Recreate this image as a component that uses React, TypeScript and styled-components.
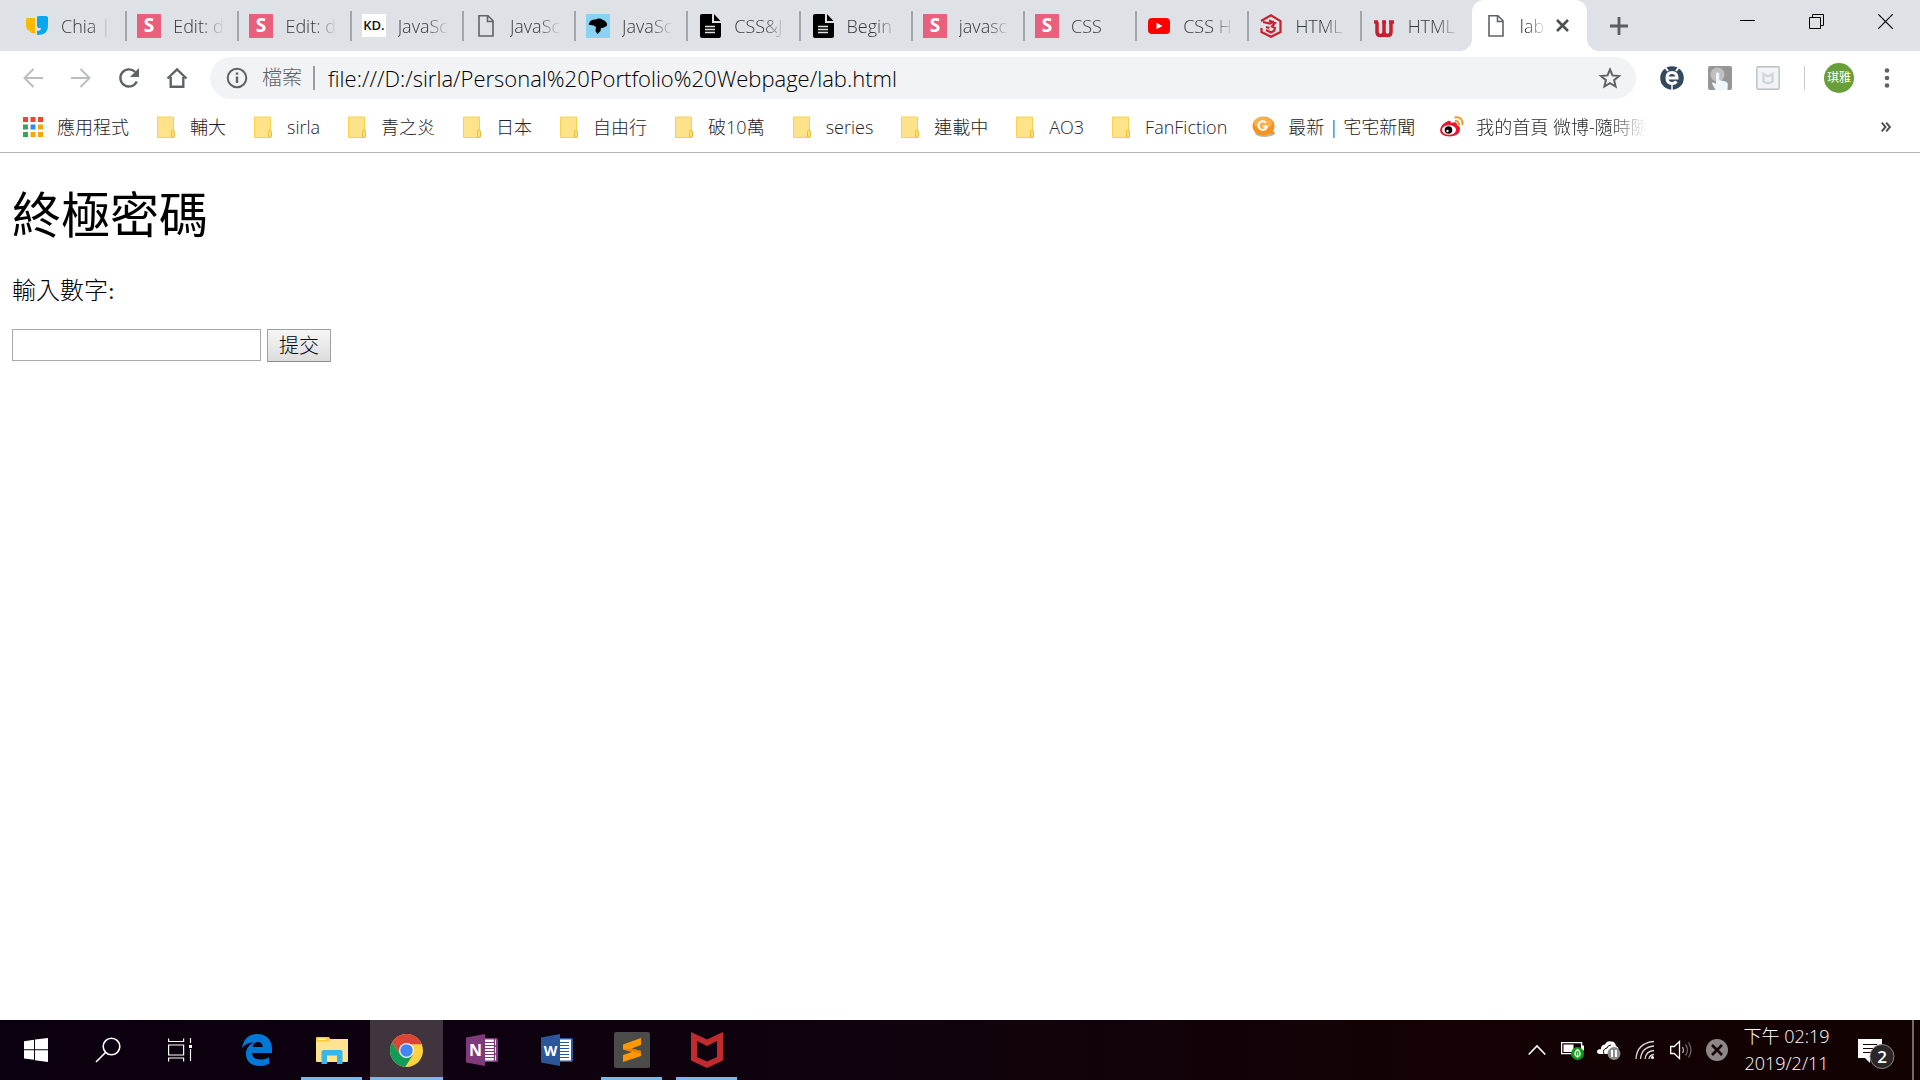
import React from "react";
import styled, { createGlobalStyle, css } from "styled-components";

const GlobalStyle = createGlobalStyle`
  *, *::before, *::after { box-sizing: border-box; }
  body { margin: 0; background: #fff; }
  button { font: inherit; color: inherit; padding: 0; border: 0; background: none; }
  a { color: inherit; text-decoration: none; }
  svg { display: block; flex: none; }
`;

const uiFont = `"Open Sans", "Noto Sans CJK TC", sans-serif`;
const pageFont = `"Liberation Serif", "Noto Sans CJK TC", serif`;

/* ---------- layout ---------- */

const Screen = styled.div`
  min-height: 100vh;
  display: flex;
  flex-direction: column;
  font-family: ${uiFont};
  font-weight: 300;
`;

const TabBar = styled.header`
  display: flex;
  height: 51px;
  background: #dee1e6;
`;

const TabStrip = styled.div`
  flex: 1;
  min-width: 0;
  display: flex;
  padding-left: 13px;
`;

const Tab = styled.a<{ $active?: boolean }>`
  flex: 1 1 0;
  min-width: 0;
  display: flex;
  align-items: center;
  padding-right: 13px;
  font-size: 18px;
  color: #35383c;
  ${(p) =>
    p.$active &&
    css`
      position: relative;
      padding-right: 16px;
      color: #1f2124;
      background: #fff;
      border-radius: 12px 12px 0 0;
      &::before,
      &::after {
        content: "";
        position: absolute;
        bottom: 0;
        width: 12px;
        height: 12px;
      }
      &::before {
        right: 100%;
        background: radial-gradient(circle at 0 0, transparent 12px, #fff 12px);
      }
      &::after {
        left: 100%;
        background: radial-gradient(circle at 100% 0, transparent 12px, #fff 12px);
      }
    `}
`;

const TabDivider = styled.span<{ $hidden?: boolean }>`
  width: 2px;
  height: 30px;
  margin-right: 10px;
  background: ${(p) => (p.$hidden ? "transparent" : "#a2a5a9")};
`;

const IconSlot = styled.span`
  flex: none;
  width: 24px;
  height: 24px;
  display: grid;
  place-items: center;
`;

const FadingText = styled.span`
  flex: 1;
  min-width: 0;
  margin-left: 12px;
  line-height: 26px;
  overflow: hidden;
  white-space: nowrap;
  mask-image: linear-gradient(to right, #000 calc(100% - 22px), transparent);
`;

const WindowArea = styled.div`
  flex: none;
  width: 333px;
  display: flex;
  justify-content: space-between;
`;

const NewTab = styled.button`
  width: 64px;
  display: grid;
  place-items: center;
`;

const WindowButtons = styled.div`
  display: flex;
`;

const WindowButton = styled.button`
  width: 69px;
  height: 42px;
  display: grid;
  place-items: center;
`;

const Toolbar = styled.nav`
  display: flex;
  align-items: center;
  height: 54px;
  padding: 0 21px;
`;

const NavButtons = styled.div`
  display: flex;
  gap: 24px;
  margin-right: 21px;
`;

const ToolButton = styled.button`
  width: 24px;
  height: 24px;
  display: grid;
  place-items: center;
`;

const Omnibox = styled.div`
  flex: 1;
  min-width: 0;
  display: flex;
  align-items: center;
  height: 42px;
  padding: 0 14px 0 15px;
  border-radius: 21px;
  background: #f1f3f4;
`;

const Scheme = styled.label`
  margin-left: 13px;
  padding-right: 11px;
  border-right: 2px solid #9a9da1;
  font-size: 20px;
  line-height: 24px;
  color: #5f6368;
`;

const Address = styled.input`
  flex: 1;
  min-width: 0;
  margin-left: 13px;
  padding: 0;
  border: 0;
  outline: 0;
  background: none;
  font: 300 22px/30px ${uiFont};
  color: #000;
`;

const Extensions = styled.div`
  display: flex;
  align-items: center;
  gap: 24px;
  margin: 0 19px 0 24px;
`;

const ToolDivider = styled.span`
  width: 1px;
  height: 24px;
  background: #c9cbce;
`;

const Avatar = styled.button`
  width: 30px;
  height: 30px;
  margin: 0 21px 0 0;
  border-radius: 50%;
  background: #689f38;
  color: #fff;
  font-size: 12px;
  font-weight: 400;
  line-height: 30px;
`;

const Bookmarks = styled.nav`
  display: flex;
  align-items: center;
  height: 48px;
  padding: 0 22px 4px 21px;
  border-bottom: 1px solid #b4b5b7;
`;

const BookmarkList = styled.div`
  flex: 1;
  min-width: 0;
  display: flex;
  gap: 25px;
`;

const Bookmark = styled.a`
  flex: none;
  display: flex;
  align-items: center;
  gap: 12px;
  font-size: 18px;
  line-height: 26px;
  white-space: nowrap;
  color: #1f2124;
`;

const ClippedTitle = styled.span`
  width: 170px;
  overflow: hidden;
  mask-image: linear-gradient(to right, #000 calc(100% - 36px), transparent);
`;

const Page = styled.main`
  flex: 1;
  padding: 34px 12px;
  font-family: ${pageFont};
  font-weight: 300;
  color: #000;
`;

const Title = styled.h1`
  margin: 0 0 26px;
  font-size: 49px;
  line-height: 60px;
  font-weight: 400;
`;

const Prompt = styled.label`
  display: block;
  margin-bottom: 20px;
  font-size: 24px;
  line-height: 36px;
`;

const Answer = styled.div`
  display: flex;
  align-items: flex-start;
  gap: 6px;
`;

const NumberInput = styled.input`
  width: 249px;
  height: 32px;
  padding: 2px 4px;
  border: 1px solid #a9a9a9;
  font-size: 20px;
`;

const Submit = styled.button`
  width: 64px;
  height: 33px;
  padding-top: 1px;
  border: 1px solid #a0a0a0;
  border-bottom-color: #8a8a8a;
  border-radius: 1px;
  background: linear-gradient(#f6f6f6, #dddddd);
  font-size: 20px;
  line-height: 30px;
`;

const Taskbar = styled.footer`
  display: flex;
  justify-content: space-between;
  height: 60px;
  background: linear-gradient(90deg, #0b000f 0%, #10030f 45%, #140204 75%, #130202 100%);
  color: #fff;
`;

const TaskGroup = styled.div`
  display: flex;
`;

const SystemButton = styled.button`
  width: 72px;
  display: grid;
  place-items: center;
`;

const Apps = styled.div`
  display: flex;
  gap: 2px;
  margin-left: 4px;
`;

const AppButton = styled.button<{ $state?: "open" | "active" }>`
  width: 73px;
  display: grid;
  grid-template-rows: 1fr 3px;
  place-items: center;
  background: ${(p) => (p.$state === "active" ? "#40353f" : "none")};
  &::after {
    content: "";
    width: ${(p) => (p.$state === "active" ? "73px" : "61px")};
    height: 3px;
    background: ${(p) => (p.$state ? "#76b9ed" : "transparent")};
  }
  svg {
    margin-top: 3px;
  }
`;

const Tray = styled.div`
  display: flex;
  align-items: center;
`;

const TrayButton = styled.button`
  width: 36px;
  height: 60px;
  display: grid;
  place-items: center;
`;

const Clock = styled.time`
  width: 107px;
  padding-right: 4px;
  text-align: center;
  font-size: 18px;
  line-height: 27px;
`;

const Notifications = styled.button`
  width: 70px;
  height: 60px;
  display: grid;
  place-items: center;
`;

const ShowDesktop = styled.button`
  width: 8px;
  height: 60px;
  border-left: 2px solid #77696a;
`;

/* ---------- favicons ---------- */

const QuoteIcon = () => (
  <svg width="24" height="24" viewBox="0 0 24 24">
    <path d="M1 5.500Q1 4 2.500 4H10v13H7c-4 0-6-2-6-6z" fill="#fcb900" />
    <path d="M4 17q6 1 6-3v5.500q-4 0-6-2.500z" fill="#fcb900" />
    <path d="M12 3.500Q12 2 13.500 2H21q2 0 2 2v7c0 7-3.500 10-11 10v-4q4 0 4-3h-1.500q-2.500 0-2.500-2.500z" fill="#09a8ec" />
  </svg>
);

const SIcon = () => (
  <svg width="24" height="24" viewBox="0 0 24 24">
    <path d="M0 0h24v24H0z" fill="#e8607c" />
    <text x="12" y="18" textAnchor="middle" fontFamily="Open Sans, sans-serif" fontWeight="700" fontSize="19" fill="#fff">S</text>
  </svg>
);

const KdIcon = () => (
  <svg width="24" height="24" viewBox="0 0 24 24">
    <path d="M0 0h24v23H0z" fill="#fff" />
    <text x="12" y="16" textAnchor="middle" fontFamily="Open Sans, sans-serif" fontWeight="600" fontSize="13" fill="#111">KD.</text>
  </svg>
);

const FileIcon = () => (
  <svg width="24" height="24" viewBox="0 0 24 24" fill="none" stroke="#5f6368" strokeWidth="1.600">
    <path d="M5 1.800h9l5 5V22H5zM13.500 2v5.500h5" />
  </svg>
);

const BirdIcon = () => (
  <svg width="24" height="24" viewBox="0 0 24 24">
    <path d="M0 0h24v24H0z" fill="#88d3f1" />
    <path d="M3 9.500Q4.500 5 10 5.500 13 3.500 17 6q4 1.500 4 4.500.5 2-1.500 2-2 1.500-4.500 1.500l-.5 3-3 3-2-3 .5-4Q8 10.500 3 11z" fill="#000" />
  </svg>
);

const DocIcon = () => (
  <svg width="24" height="24" viewBox="0 0 24 24">
    <path d="M2 2q0-2 2-2h10v9h9v13q0 2-2 2H4q-2 0-2-2zM16 0l6.500 7H16z" fill="#000" />
    <path d="M7 12.500h10M7 15.500h10M7 18.500h10" stroke="#dee1e6" strokeWidth="1.400" />
  </svg>
);

const YouTubeIcon = () => (
  <svg width="24" height="24" viewBox="0 0 24 24">
    <rect x="1" y="4" width="22" height="16" rx="4" fill="#f00" />
    <path d="M9.500 8.700v6.600l6-3.300z" fill="#fff" />
  </svg>
);

const HexThreeIcon = () => (
  <svg width="24" height="24" viewBox="0 0 24 24" fill="none" stroke="#c8202f" strokeWidth="2.200">
    <path d="M2 7l10-5.700L21.500 7v11L12 22.800 2.500 18v-4" />
    <path d="M4 8l7 1.500 4-2M7 13l3.500 1M10 6.500l6 2.500-3 3.500 3 1.500-1 3-3 1.500-5-2.500" />
  </svg>
);

const WIcon = () => (
  <svg width="24" height="24" viewBox="0 0 24 24" fill="none" stroke="#c5202f" strokeWidth="3.500">
    <path d="M2 8h4M5 8v10q0 3.500 3.500 3.500T12 18V8M12 18q0 3.500 3.500 3.500T19 18V8M17 8h5M10 8h4" />
  </svg>
);

/* ---------- bookmark icons ---------- */

const appColors = ["#f44336", "#f44336", "#f44336", "#34a853", "#2491eb", "#f9a60a", "#34a853", "#f9a60a", "#f9a60a"];

const AppsIcon = () => (
  <svg width="20" height="20" viewBox="0 0 20 20">
    {appColors.map((c, i) => (
      <rect key={i} x={(i % 3) * 7.500} y={Math.floor(i / 3) * 7.500} width="5" height="5" fill={c} />
    ))}
  </svg>
);

const FolderIcon = () => (
  <svg width="18" height="22" viewBox="0 0 18 22">
    <path d="M.5 1h16v15q1-1 1 1v3.500q0 1-1 1H.5z" fill="#ffe38b" stroke="#f8d348" />
    <path d="M14.500 21v-5.500q0-1.500 1.500-1.500t1.500 1.500V20q0 1.500-1.500 1.500z" fill="#fde07c" stroke="#e8bf3c" />
  </svg>
);

const GIcon = () => (
  <svg width="24" height="22" viewBox="0 0 24 22">
    <ellipse cx="13" cy="17" rx="10" ry="4" fill="#b9b5b0" />
    <ellipse cx="11.500" cy="10" rx="11" ry="9.500" fill="#f7941d" />
    <ellipse cx="11" cy="7" rx="9" ry="6" fill="#fbb04c" />
    <path d="M19 14l4 4-7-.5z" fill="#f7941d" />
    <path d="M14 6.800A4.300 4.300 0 1 0 15 10.500H11" fill="none" stroke="#fff" strokeWidth="2" />
  </svg>
);

const WeiboIcon = () => (
  <svg width="24" height="22" viewBox="0 0 24 22">
    <path d="M8 5q3-1 3 2 6-2 6 2 3 1 3 4 0 7-10 7.500Q0 20 0 14 1 8 8 5z" fill="#e6162d" />
    <ellipse cx="9" cy="14" rx="7" ry="4.800" fill="#fff" />
    <circle cx="8.500" cy="14" r="3.800" fill="#000" />
    <circle cx="7.500" cy="15" r="1.200" fill="#fff" />
    <path d="M14.500 1.500Q23 0 22.500 9M15 5q4-.5 4 4" fill="none" stroke="#f7931e" strokeWidth="1.900" />
  </svg>
);

/* ---------- toolbar icons ---------- */

const line = { fill: "none", stroke: "#5f6368", strokeWidth: 2.400 } as const;

const BackIcon = () => (
  <svg width="24" height="24" viewBox="0 0 24 24" fill="none" stroke="#bbbdc0" strokeWidth="2">
    <path d="M22 12H4M12.500 3L3.500 12l9 9" />
  </svg>
);

const ForwardIcon = () => (
  <svg width="24" height="24" viewBox="0 0 24 24" fill="none" stroke="#bbbdc0" strokeWidth="2">
    <path d="M2 12h18M11.500 3l9 9-9 9" />
  </svg>
);

const ReloadIcon = () => (
  <svg width="24" height="24" viewBox="0 0 24 24">
    <path d="M19.800 15.500A8.600 8.600 0 1 1 18.200 6" {...line} />
    <path d="M22 2v9h-9z" fill="#5f6368" />
  </svg>
);

const HomeIcon = () => (
  <svg width="24" height="24" viewBox="0 0 24 24">
    <path d="M2.500 12.500L12 3.500l9.500 9M5.700 11v9.800h12.600V11" {...line} />
  </svg>
);

const InfoIcon = () => (
  <svg width="24" height="24" viewBox="0 0 24 24">
    <circle cx="12" cy="12" r="9.300" {...line} strokeWidth="2" />
    <path d="M12 10.500v6.500M12 6.500v2.300" {...line} />
  </svg>
);

const StarIcon = () => (
  <svg width="24" height="24" viewBox="0 0 24 24">
    <path d="M12 3.500l2.500 5.900 6.500.6-4.900 4.200 1.500 6.300L12 17.100l-5.600 3.400 1.500-6.300L3 10l6.500-.6z" {...line} strokeWidth="2" />
  </svg>
);

const EIcon = () => (
  <svg width="24" height="24" viewBox="0 0 24 24">
    <circle cx="12" cy="12" r="11.800" fill="#34495e" />
    <path d="M5 1l3 4M19 1l-3 4" stroke="#fff" strokeWidth="2" />
    <path d="M7 12h10q0-5.500-5-5.500T7 12q0 5.500 5 5.500 3 0 4.500-2" fill="none" stroke="#fff" strokeWidth="3" />
    <path d="M12 19v5" stroke="#fff" strokeWidth="1.500" />
  </svg>
);

const TouchIcon = () => (
  <svg width="24" height="24" viewBox="0 0 24 24">
    <rect width="24" height="24" rx="2" fill="#969696" />
    <circle cx="9.500" cy="8.500" r="7" fill="#c0c0c0" />
    <path d="M8 8q0-1.700 1.600-1.700T11.200 8v6l6.300 1.500q2.500.5 2.300 3L19.500 24H7.500L4 17.500q0-2 4 .5z" fill="#f0f6fd" />
  </svg>
);

const ShieldIcon = () => (
  <svg width="24" height="24" viewBox="0 0 24 24" fill="none">
    <rect x=".8" y=".8" width="22.400" height="22.400" rx="1.500" fill="#f1f3f4" stroke="#b8c0c6" strokeWidth="1.400" />
    <path d="M7.500 8l4.500 2.500L16.500 8v7.500L12 17.500l-4.500-2z" stroke="#cfd5d9" strokeWidth="2.400" />
  </svg>
);

const MenuIcon = () => (
  <svg width="24" height="24" viewBox="0 0 24 24" fill="#5f6368">
    <circle cx="12" cy="4.500" r="2.300" />
    <circle cx="12" cy="12" r="2.300" />
    <circle cx="12" cy="19.500" r="2.300" />
  </svg>
);

/* ---------- data ---------- */

const tabs = [
  { title: "Chia | ", Icon: QuoteIcon },
  { title: "Edit: d", Icon: SIcon },
  { title: "Edit: d", Icon: SIcon },
  { title: "JavaSc", Icon: KdIcon },
  { title: "JavaSc", Icon: FileIcon },
  { title: "JavaSc", Icon: BirdIcon },
  { title: "CSS&J", Icon: DocIcon },
  { title: "Begin", Icon: DocIcon },
  { title: "javasc", Icon: SIcon },
  { title: "CSS", Icon: SIcon },
  { title: "CSS H", Icon: YouTubeIcon },
  { title: "HTML", Icon: HexThreeIcon },
  { title: "HTML", Icon: WIcon },
];

const folders = ["輔大", "sirla", "青之炎", "日本", "自由行", "破10萬", "series", "連載中", "AO3", "FanFiction"];

/* ---------- taskbar icons ---------- */

const WindowsIcon = () => (
  <svg width="24" height="24" viewBox="0 0 24 24" fill="#fff">
    <path d="M0 3.200L10 1.800v9.400H0zM11 1.600L24 0v11.200H11zM0 12.200h10v9.600L0 20.600zM11 12.200h13V24l-13-1.800z" />
  </svg>
);

const SearchIcon = () => (
  <svg width="26" height="26" viewBox="0 0 26 26" fill="none" stroke="#fff" strokeWidth="1.600">
    <circle cx="16.500" cy="9.500" r="8.300" />
    <path d="M10.500 15.500L1 25" />
  </svg>
);

const TaskViewIcon = () => (
  <svg width="24" height="24" viewBox="0 0 24 24" fill="none" stroke="#fff" strokeWidth="1.200">
    <path d="M.6.5v3h15v-3M.6 23.500v-3.500h15v3.500M.6 7h15v10H.6zM22.500 0v5M22.500 11v12" />
    <path d="M21 7h3v3h-3z" fill="#fff" stroke="none" />
  </svg>
);

const EdgeIcon = () => (
  <svg width="30" height="32" viewBox="0 0 30 32">
    <path
      d="M0 14C1.500 5 7 0 15.500 0 24 0 30 6 30 14.500V19H10c0 4.500 4 6.500 8.500 6.500 3 0 6-.8 8.500-2.300v6.500C24 31.400 21 32 17.500 32 9 32 4 27 4 20c0-5.500 3-9.500 8-11.500C6.500 8.500 2.500 10.500 0 14zM10.500 13h10.200c0-3-1.500-5-4.700-5s-5 2-5.500 5z"
      fill="#0078d7"
    />
  </svg>
);

const ExplorerIcon = () => (
  <svg width="32" height="27" viewBox="0 0 32 27">
    <path d="M0 2h32v22q0 1-1 1H1q-1 0-1-1z" fill="#ffe391" />
    <path d="M0 1q0-1 1-1h12l1.500 2.500L13 4.500H0z" fill="#fccb3a" />
    <path d="M2 2.300h8" stroke="#fff" strokeWidth="1.200" />
    <path d="M5.500 27V15q0-2 2-2h17q2 0 2 2v12h-5.500v-8.500H11V27z" fill="#38b6e8" />
  </svg>
);

const ChromeIcon = () => (
  <svg width="33" height="33" viewBox="0 0 48 48">
    <circle cx="24" cy="24" r="24" fill="#fdd13f" />
    <path d="M3.200 12A24 24 0 0 1 44.800 12L46 15H24l-9.500 14z" fill="#db4437" />
    <path d="M3.200 12A24 24 0 0 0 22 47.900L33.500 30 24 34l-9.500-4.500z" fill="#0f9d58" />
    <circle cx="24" cy="24" r="11" fill="#f1f1f1" />
    <circle cx="24" cy="24" r="9" fill="#4285f4" />
  </svg>
);

const OfficeIcon = ({ letter, color }: { letter: string; color: string }) => (
  <svg width="32" height="32" viewBox="0 0 32 32">
    <path d="M18 4h12.500q1.500 0 1.500 1.500v21q0 1.500-1.500 1.500H18z" fill={color} />
    <path d="M19 5.500h11v21H19z" fill="#fff" />
    <path d="M19 8.500h9M19 11.500h9M19 14.500h9M19 17.500h9M19 20.500h9M19 23.500h9" stroke={color} strokeWidth="1.200" />
    {letter === "N" && <path d="M28.500 4v24M28.500 12h3M28.500 20h3" stroke={color} strokeWidth="1.400" />}
    <path d="M0 3.500L19 0v32L0 28.500z" fill={color} />
    <text x="9.500" y="22" textAnchor="middle" fontFamily="Open Sans, sans-serif" fontWeight="700" fontSize={letter === "N" ? 16 : 14} fill="#fff">{letter}</text>
  </svg>
);

const SublimeIcon = () => (
  <svg width="36" height="36" viewBox="0 0 36 36">
    <rect width="36" height="36" rx="2" fill="#4b4b49" />
    <path d="M9 12.500L27 6v7l-9.500 3.500L27 19v5L9 30v-7l9-3-9-2.500z" fill="#ff9800" />
    <path d="M9 17.500l8.500-1L27 19v2.500l-8-2z" fill="#e88100" />
  </svg>
);

const McAfeeIcon = () => (
  <svg width="32" height="36" viewBox="0 0 32 36">
    <path d="M0 0l16 7.500L32 0v28.500L16 36 0 28.500zM6 9v16l10 4.500L26 25V9l-10 5z" fill="#c02b2e" fillRule="evenodd" />
  </svg>
);

const ChevronIcon = () => (
  <svg width="18" height="12" viewBox="0 0 18 12" fill="none" stroke="#fff" strokeWidth="1.600">
    <path d="M.7 10.500L9 2l8.300 8.500" />
  </svg>
);

const BatteryIcon = () => (
  <svg width="24" height="20" viewBox="0 0 24 20">
    <path d="M.6 2.600h20v11H.6z" fill="none" stroke="#fff" strokeWidth="1.300" />
    <path d="M2.500 4.500h10v7.500h-10zM21 5.500h2v5h-2z" fill="#fff" />
    <circle cx="16.500" cy="13.500" r="6.500" fill="#129a1c" />
    <path d="M16.500 9.500q3 2.500 2.500 5-.5 2-2.500 2-2 0-2.500-2-.5-2.500 2.500-5zM16.500 12.500v5.500" fill="none" stroke="#fff" strokeWidth="1.200" />
  </svg>
);

const CloudIcon = () => (
  <svg width="24" height="20" viewBox="0 0 24 20">
    <path d="M4 11Q3 5 8 4.500 10 0 14 1.500 18 1 19 6q3 1 2.500 5v3H3q-3 0-3-2.500T4 9z" fill="#fff" />
    <path d="M7 14q-2-5 3-6 1-3 4-3" fill="none" stroke="#150304" strokeWidth="1" />
    <circle cx="17" cy="13.500" r="6.500" fill="#8c8c8c" />
    <path d="M15 10v7M19 10v7" stroke="#fff" strokeWidth="2" />
  </svg>
);

const WifiIcon = () => (
  <svg width="20" height="20" viewBox="0 0 20 20" fill="none" stroke="#d8d4d4" strokeWidth="1.300">
    <path d="M1 19Q2 3 19 1.500M5.500 19Q6.500 7 19 6M10 19q1-8 9-8.500M14 19q.5-4 5-4.500" />
    <circle cx="17.500" cy="17.500" r="1.500" fill="#fff" stroke="none" />
  </svg>
);

const VolumeIcon = () => (
  <svg width="22" height="20" viewBox="0 0 22 20" fill="none" stroke="#fff" strokeWidth="1.300">
    <path d="M.7 6.500h3.500L9.500 1.500v17l-5.300-5H.7z" />
    <path d="M12.500 7q2 3 0 6" stroke="#aaa" />
    <path d="M15.500 4.500q4 5.500 0 11M18.500 2.500q5 7.500 0 15" stroke="#6d6364" />
  </svg>
);

const BlockedIcon = () => (
  <svg width="22" height="22" viewBox="0 0 22 22">
    <circle cx="11" cy="11" r="11" fill="#8e8788" />
    <path d="M6 6l10 10M16 6L6 16" stroke="#150304" strokeWidth="2.600" />
  </svg>
);

const NoticeIcon = () => (
  <svg width="38" height="38" viewBox="0 0 38 38">
    <path d="M0 8h24v19H12v5l-5-5H0z" fill="#fff" />
    <path d="M5 13.500h14M5 17.500h14M5 21.500h9" stroke="#150304" strokeWidth="1.200" />
    <circle cx="24" cy="25.500" r="12" fill="#2b2728" stroke="#8b8586" />
    <text x="24" y="32" textAnchor="middle" fontFamily="Open Sans, sans-serif" fontWeight="600" fontSize="17" fill="#fff">2</text>
  </svg>
);

/* ---------- app ---------- */

export default function App() {
  return (
    <Screen>
      <GlobalStyle />
      <TabBar>
        <TabStrip>
          {tabs.map(({ title, Icon }, i) => (
            <Tab key={i} href="#">
              <TabDivider $hidden={i === 0} />
              <IconSlot><Icon /></IconSlot>
              <FadingText>{title}</FadingText>
            </Tab>
          ))}
          <Tab href="#" $active>
            <TabDivider $hidden />
            <IconSlot><FileIcon /></IconSlot>
            <FadingText>lab</FadingText>
            <IconSlot>
              <svg width="24" height="24" viewBox="0 0 24 24" stroke="#4b4e52" strokeWidth="2.600">
                <path d="M10 6l11 11M21 6L10 17" />
              </svg>
            </IconSlot>
          </Tab>
        </TabStrip>
        <WindowArea>
          <NewTab aria-label="New tab">
            <svg width="18" height="18" viewBox="0 0 18 18" stroke="#5a5d61" strokeWidth="2.800">
              <path d="M9 0v18M0 9h18" />
            </svg>
          </NewTab>
          <WindowButtons>
            <WindowButton aria-label="Minimize">
              <svg width="15" height="15" viewBox="0 0 15 15" stroke="#000">
                <path d="M0 6.500h15" />
              </svg>
            </WindowButton>
            <WindowButton aria-label="Restore">
              <svg width="15" height="15" viewBox="0 0 15 15" stroke="#000" fill="none">
                <path d="M.5 3.500h11v11H.5zM3.500 3.500v-3h11v11h-3" />
              </svg>
            </WindowButton>
            <WindowButton aria-label="Close">
              <svg width="15" height="15" viewBox="0 0 15 15" stroke="#000" strokeWidth="1.200">
                <path d="M0 0l15 15M15 0L0 15" />
              </svg>
            </WindowButton>
          </WindowButtons>
        </WindowArea>
      </TabBar>

      <Toolbar>
        <NavButtons>
          <ToolButton aria-label="Back"><BackIcon /></ToolButton>
          <ToolButton aria-label="Forward"><ForwardIcon /></ToolButton>
          <ToolButton aria-label="Reload"><ReloadIcon /></ToolButton>
          <ToolButton aria-label="Home"><HomeIcon /></ToolButton>
        </NavButtons>
        <Omnibox>
          <InfoIcon />
          <Scheme htmlFor="address">檔案</Scheme>
          <Address id="address" defaultValue="file:///D:/sirla/Personal%20Portfolio%20Webpage/lab.html" />
          <ToolButton aria-label="Bookmark"><StarIcon /></ToolButton>
        </Omnibox>
        <Extensions>
          <ToolButton aria-label="Extension E"><EIcon /></ToolButton>
          <ToolButton aria-label="Extension Touch"><TouchIcon /></ToolButton>
          <ToolButton aria-label="Extension Shield"><ShieldIcon /></ToolButton>
          <ToolDivider />
        </Extensions>
        <Avatar>琪雅</Avatar>
        <ToolButton aria-label="Menu"><MenuIcon /></ToolButton>
      </Toolbar>

      <Bookmarks>
        <BookmarkList>
          <Bookmark href="#"><IconSlot><AppsIcon /></IconSlot>應用程式</Bookmark>
          {folders.map((name) => (
            <Bookmark key={name} href="#"><IconSlot><FolderIcon /></IconSlot>{name}</Bookmark>
          ))}
          <Bookmark href="#"><IconSlot><GIcon /></IconSlot>最新 | 宅宅新聞</Bookmark>
          <Bookmark href="#"><IconSlot><WeiboIcon /></IconSlot><ClippedTitle>我的首頁 微博-隨時隨</ClippedTitle></Bookmark>
        </BookmarkList>
        <ToolButton aria-label="More bookmarks">
          <svg width="10" height="10" viewBox="0 0 10 10" fill="none" stroke="#4b4e52" strokeWidth="1.900">
            <path d="M.7.7L4.500 5 .7 9.300M5.200.7L9 5 5.200 9.300" />
          </svg>
        </ToolButton>
      </Bookmarks>

      <Page>
        <Title>終極密碼</Title>
        <Prompt htmlFor="guess">輸入數字:</Prompt>
        <Answer>
          <NumberInput id="guess" type="text" />
          <Submit type="button">提交</Submit>
        </Answer>
      </Page>

      <Taskbar>
        <TaskGroup>
          <SystemButton aria-label="Start"><WindowsIcon /></SystemButton>
          <SystemButton aria-label="Search"><SearchIcon /></SystemButton>
          <SystemButton aria-label="Task view"><TaskViewIcon /></SystemButton>
          <Apps>
            <AppButton aria-label="Edge"><EdgeIcon /></AppButton>
            <AppButton aria-label="Explorer" $state="open"><ExplorerIcon /></AppButton>
            <AppButton aria-label="Chrome" $state="active"><ChromeIcon /></AppButton>
            <AppButton aria-label="OneNote"><OfficeIcon letter="N" color="#80397b" /></AppButton>
            <AppButton aria-label="Word"><OfficeIcon letter="W" color="#2b579a" /></AppButton>
            <AppButton aria-label="Sublime Text" $state="open"><SublimeIcon /></AppButton>
            <AppButton aria-label="McAfee" $state="open"><McAfeeIcon /></AppButton>
          </Apps>
        </TaskGroup>
        <Tray>
          <TrayButton aria-label="Show hidden icons"><ChevronIcon /></TrayButton>
          <TrayButton aria-label="Battery"><BatteryIcon /></TrayButton>
          <TrayButton aria-label="OneDrive"><CloudIcon /></TrayButton>
          <TrayButton aria-label="Network"><WifiIcon /></TrayButton>
          <TrayButton aria-label="Volume"><VolumeIcon /></TrayButton>
          <TrayButton aria-label="Blocked"><BlockedIcon /></TrayButton>
          <Clock>下午 02:19<br />2019/2/11</Clock>
          <Notifications aria-label="Notifications"><NoticeIcon /></Notifications>
          <ShowDesktop aria-label="Show desktop" />
        </Tray>
      </Taskbar>
    </Screen>
  );
}
